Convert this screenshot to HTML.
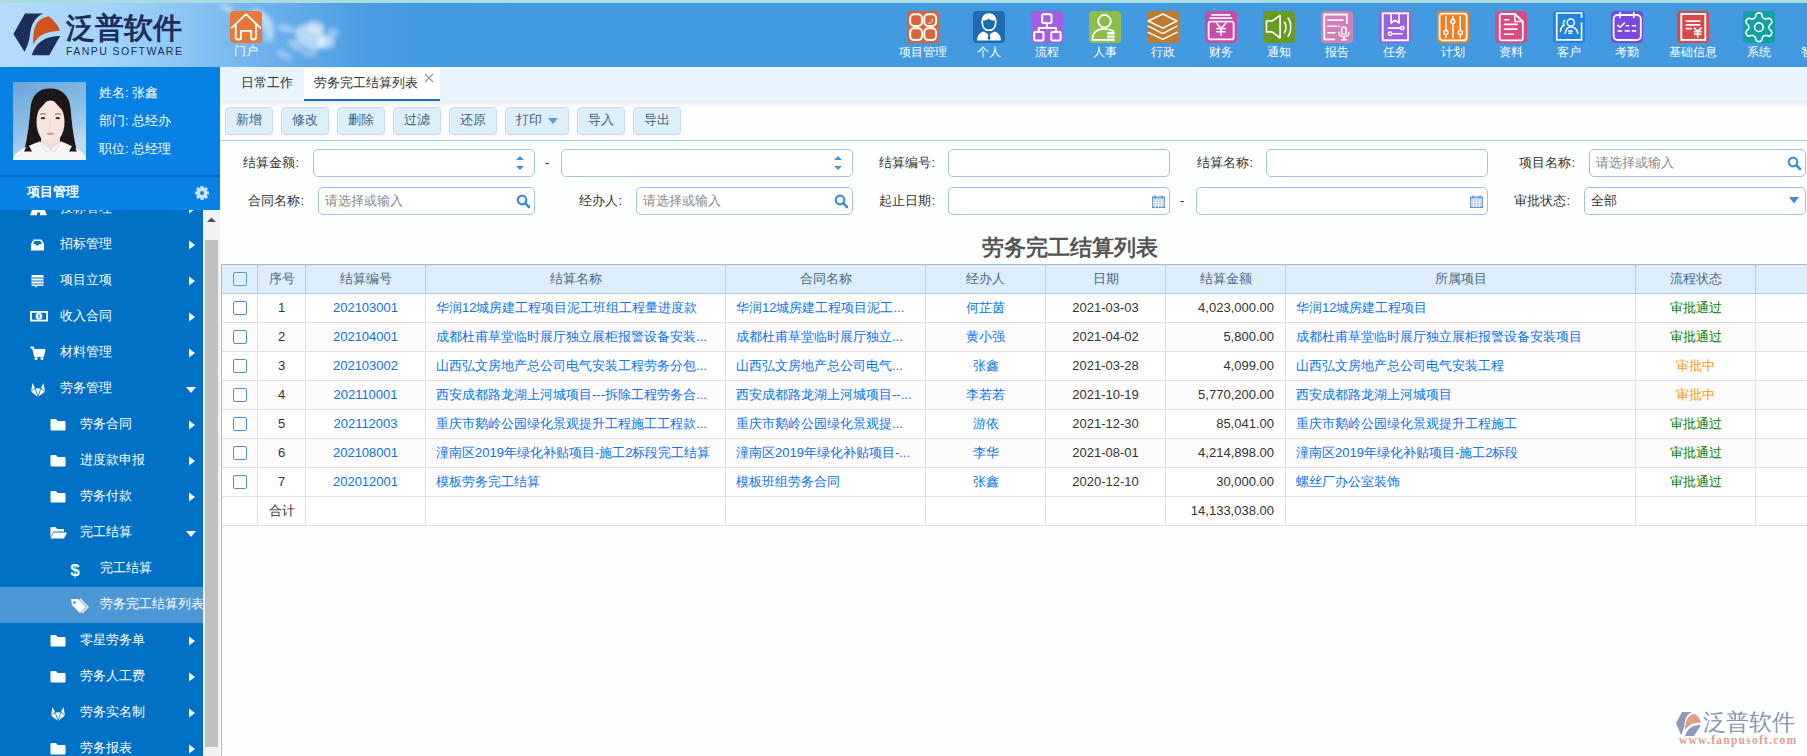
<!DOCTYPE html>
<html><head><meta charset="utf-8"><title>劳务完工结算列表</title>
<style>
*{box-sizing:border-box;margin:0;padding:0}
html,body{width:1807px;height:756px;overflow:hidden}
body{position:relative;font-family:"Liberation Sans",sans-serif;font-size:13px;color:#333;background:#fdfefe}
.a{position:absolute}
.t{position:absolute;white-space:nowrap;line-height:16px}
</style></head><body>

<div class="a" style="left:0;top:0;width:1807px;height:3px;background:#a9dbdf"></div>
<div class="a" style="left:0;top:3px;width:1807px;height:64px;background:linear-gradient(90deg,#b4dcfc 0px,#a5d5f9 100px,#8ac4f3 190px,#64abea 290px,#4a9de2 370px,#439ae0 420px,#4299df 1807px)"></div>
<svg class="a" style="left:205px;top:3px" width="150" height="64" viewBox="205 3 150 64">
<defs><filter id="bl" x="-50%" y="-50%" width="200%" height="200%"><feGaussianBlur stdDeviation="2"/></filter></defs>
<g fill="#ffffff" filter="url(#bl)">
<ellipse cx="227" cy="8.5" rx="8" ry="3" opacity="0.45" transform="rotate(28 227 8.5)"/>
<ellipse cx="258" cy="13" rx="8" ry="4" opacity="0.4" transform="rotate(20 258 13)"/>
<ellipse cx="267" cy="25" rx="6" ry="12" opacity="0.5" transform="rotate(-20 267 25)"/>
<ellipse cx="269" cy="38" rx="6" ry="4" opacity="0.35"/>
<ellipse cx="286" cy="28.5" rx="9" ry="3.5" opacity="0.4" transform="rotate(15 286 28.5)"/>
<ellipse cx="311" cy="37" rx="17" ry="11" opacity="0.55" transform="rotate(28 311 37)"/>
<ellipse cx="316" cy="27" rx="9" ry="6" opacity="0.55" transform="rotate(20 316 27)"/>
<ellipse cx="326" cy="42" rx="9" ry="7" opacity="0.5"/>
<ellipse cx="333" cy="33" rx="6" ry="5" opacity="0.35"/>
<ellipse cx="296" cy="45" rx="9" ry="5" opacity="0.35" transform="rotate(30 296 45)"/>
<ellipse cx="284" cy="55" rx="9" ry="3.5" opacity="0.3" transform="rotate(25 284 55)"/>
<ellipse cx="310" cy="53" rx="8" ry="4" opacity="0.3"/>
</g></svg>
<svg class="a" style="left:10px;top:10px" width="56" height="50" viewBox="10 10 56 50">
<path d="M13.4 34 L25 13.4 L43.4 13.4 C36 16 31 24 30 34 C29.5 41 27 47 24.5 51.8 Z" fill="#1c2f5c"/>
<path d="M31.8 55.3 L49.2 55.3 L60.2 36 C52 36 44 38 38 44 C35 47 33 51 31.8 55.3 Z" fill="#1c2f5c"/>
<path d="M33.2 44.7 C33 36 33.5 28 37 23 C40 19 45 16.4 49.2 16.4 C54 20 58 25 60.2 30.8 C52 31 44 33 39 37 C36 39.5 34.5 42 33.2 44.7 Z" fill="#d0541f"/>
</svg>
<div class="t" style="left:66px;top:10px;font-size:29px;line-height:36px;color:#1c2f5c;letter-spacing:0px;font-weight:bold">泛普软件</div>
<div class="t" style="left:66px;top:43.5px;font-size:10.5px;line-height:14px;color:#1c2f5c;letter-spacing:1.45px">FANPU SOFTWARE</div>
<div class="a" style="left:230px;top:11px;width:32px;height:32px;border-radius:4px;background:#e8783a"></div>
<svg class="a" style="left:230px;top:11px" width="32" height="32" viewBox="0 0 32 32">
<path d="M1.7 16.9 L16 3.2 L30.3 16.9 M5.7 14 V26.5 Q5.7 28.5 7.7 28.5 H9 Q11 28.5 11 26.5 V19.8 H21.2 V26.5 Q21.2 28.5 23.2 28.5 H24 Q26 28.5 26 26.5 V14" fill="none" stroke="#fff" stroke-width="1.8" stroke-linejoin="round" stroke-linecap="round"/></svg>
<div class="t" style="left:234px;top:44px;font-size:12px;line-height:14px;color:#fff">门户</div>
<div class="a" style="left:907px;top:11px;width:32px;height:32px;border-radius:4px;background:#d5663a"></div>
<svg class="a" style="left:907px;top:11px" width="32" height="32" viewBox="0 0 32 32"><g fill="none" stroke="#fff" stroke-width="2" stroke-linecap="round" stroke-linejoin="round"><rect x="3.2" y="3.2" width="11.8" height="11.8" rx="4"/><rect x="17.3" y="3.2" width="11.8" height="11.8" rx="4"/><rect x="3.2" y="17.3" width="11.8" height="11.8" rx="4"/><rect x="17.3" y="17.3" width="11.8" height="11.8" rx="4"/><path d="M25.5 8 Q25.5 12 22 12.3" stroke-width="0.9"/></g></svg>
<div class="t" style="left:899px;top:44px;width:48px;text-align:center;font-size:12px;line-height:16px;color:#fff">项目管理</div>
<div class="a" style="left:973px;top:11px;width:32px;height:32px;border-radius:4px;background:#1d6bb0"></div>
<svg class="a" style="left:973px;top:11px" width="32" height="32" viewBox="0 0 32 32"><g fill="none" stroke="#fff" stroke-width="2" stroke-linecap="round" stroke-linejoin="round"><path d="M8.6 11 C8.4 5 11.5 2.2 16 2.2 C20.5 2.2 23.6 5 23.4 11 L22.5 9.5 C20 9.8 17 9.2 15.5 7.5 C14 9.3 11 9.8 9.4 9.5 Z" fill="#fff" stroke="none"/><path d="M9.2 10 C9 16 11.5 19.3 16 19.3 C20.5 19.3 23 16 22.8 10" stroke-width="1.6"/><path d="M4 29.4 C4.5 23.5 7 21.5 10.5 20.4 L14.3 22.5 L15.2 24 L14.6 27.5 L16 29 L17.4 27.5 L16.8 24 L17.7 22.5 L21.5 20.4 C25 21.5 27.5 23.5 28 29.4 Z" fill="#fff" stroke="none"/></g></svg>
<div class="t" style="left:977px;top:44px;width:24px;text-align:center;font-size:12px;line-height:16px;color:#fff">个人</div>
<div class="a" style="left:1031px;top:11px;width:32px;height:32px;border-radius:4px;background:#a45ee6"></div>
<svg class="a" style="left:1031px;top:11px" width="32" height="32" viewBox="0 0 32 32"><g fill="none" stroke="#fff" stroke-width="2" stroke-linecap="round" stroke-linejoin="round"><rect x="11.2" y="3.2" width="9.3" height="8.8" rx="1"/><rect x="3.2" y="21" width="9.3" height="8.4" rx="1"/><rect x="20.3" y="21" width="9.3" height="8.4" rx="1"/><path d="M15.9 12 V17 M7.8 21 V17 H24.9 V21"/></g></svg>
<div class="t" style="left:1035px;top:44px;width:24px;text-align:center;font-size:12px;line-height:16px;color:#fff">流程</div>
<div class="a" style="left:1089px;top:11px;width:32px;height:32px;border-radius:4px;background:#8dbd4a"></div>
<svg class="a" style="left:1089px;top:11px" width="32" height="32" viewBox="0 0 32 32"><g fill="none" stroke="#fff" stroke-width="2" stroke-linecap="round" stroke-linejoin="round"><circle cx="15.5" cy="10.2" r="6.3" stroke-width="1.7"/><path d="M3.4 28.9 C3 22 8 17.8 15 17.8 C19 17.8 22.5 19 24.4 20.2 M3.4 28.9 H18.3" stroke-width="1.7"/><path d="M18.2 22.3 H25.6 M18.2 25.6 H25.6 M18.2 28.9 H25.6" stroke-width="2.4" stroke-linecap="butt"/></g></svg>
<div class="t" style="left:1093px;top:44px;width:24px;text-align:center;font-size:12px;line-height:16px;color:#fff">人事</div>
<div class="a" style="left:1147px;top:11px;width:32px;height:32px;border-radius:4px;background:#c07a30"></div>
<svg class="a" style="left:1147px;top:11px" width="32" height="32" viewBox="0 0 32 32"><g fill="none" stroke="#fff" stroke-width="2" stroke-linecap="round" stroke-linejoin="round"><path d="M15.8 3 L29.9 10 L15.8 17.1 L1.2 10 Z" stroke-width="1.5"/><path d="M1.2 15.2 L15.8 22.7 L29.9 15.2" stroke-width="1.5"/><path d="M1.2 21.3 L15.8 28.4 L29.9 21.3" stroke-width="1.5"/></g></svg>
<div class="t" style="left:1151px;top:44px;width:24px;text-align:center;font-size:12px;line-height:16px;color:#fff">行政</div>
<div class="a" style="left:1205px;top:11px;width:32px;height:32px;border-radius:4px;background:#c94aa8"></div>
<svg class="a" style="left:1205px;top:11px" width="32" height="32" viewBox="0 0 32 32"><g fill="none" stroke="#fff" stroke-width="2" stroke-linecap="round" stroke-linejoin="round"><path d="M7.2 3.9 H24.6 M5.3 7.2 H26.5" stroke-width="1.8"/><rect x="3.6" y="10.6" width="25" height="17.8" rx="2" stroke-width="1.8"/><path d="M11.6 12.5 L16.1 17.4 L20.6 12.5 M16.1 17.4 V24.2 M11.8 17.6 H20.4 M11.8 20.8 H20.4" stroke-width="1.6"/></g></svg>
<div class="t" style="left:1209px;top:44px;width:24px;text-align:center;font-size:12px;line-height:16px;color:#fff">财务</div>
<div class="a" style="left:1263px;top:11px;width:32px;height:32px;border-radius:4px;background:#6b9a22"></div>
<svg class="a" style="left:1263px;top:11px" width="32" height="32" viewBox="0 0 32 32"><g fill="none" stroke="#fff" stroke-width="2" stroke-linecap="round" stroke-linejoin="round"><path d="M3.5 10 H9.1 L17.1 4.4 V27 L9.1 20.9 H3.5 Z" stroke-width="1.6"/><path d="M21.4 11.3 C23.5 13.5 23.5 19 21.4 21.4 M25.1 7 C28.5 11 28.5 21 25.1 25.3" stroke-width="1.6"/></g></svg>
<div class="t" style="left:1267px;top:44px;width:24px;text-align:center;font-size:12px;line-height:16px;color:#fff">通知</div>
<div class="a" style="left:1321px;top:11px;width:32px;height:32px;border-radius:4px;background:#d27fb8"></div>
<svg class="a" style="left:1321px;top:11px" width="32" height="32" viewBox="0 0 32 32"><g fill="none" stroke="#fff" stroke-width="2" stroke-linecap="round" stroke-linejoin="round"><path d="M14.1 28.4 H3.3 V3.5 H25.9 V12.9" stroke-width="1.8" stroke-linejoin="miter" stroke-linecap="butt"/><path d="M6.8 9.1 H22 M6.8 15.2 H15.5 M6.8 21.8 H14" stroke-width="1.6"/><circle cx="18" cy="15.2" r="0.9" fill="#fff" stroke="none"/><rect x="20.6" y="16" width="4.6" height="7.6" rx="2.3" stroke-width="1.5"/><path d="M18 21.5 C18 27 27.9 27 27.9 21.5 M23 26.4 V28.8 M20.5 28.8 H25.5" stroke-width="1.5"/></g></svg>
<div class="t" style="left:1325px;top:44px;width:24px;text-align:center;font-size:12px;line-height:16px;color:#fff">报告</div>
<div class="a" style="left:1379px;top:11px;width:32px;height:32px;border-radius:4px;background:#9b60e2"></div>
<svg class="a" style="left:1379px;top:11px" width="32" height="32" viewBox="0 0 32 32"><g fill="none" stroke="#fff" stroke-width="2" stroke-linecap="round" stroke-linejoin="round"><rect x="3.7" y="2.3" width="25.3" height="27" stroke-width="1.9" stroke-linejoin="miter"/><path d="M12.1 2.3 V12 L16 9.1 L20.1 12 V2.3" stroke-width="1.6"/><path d="M9.3 17.1 H21.5 M12.8 22.8 H23" stroke-width="1.6"/><circle cx="23.3" cy="17.1" r="1.7" stroke-width="1.5"/><circle cx="11.1" cy="22.8" r="1.7" stroke-width="1.5"/></g></svg>
<div class="t" style="left:1383px;top:44px;width:24px;text-align:center;font-size:12px;line-height:16px;color:#fff">任务</div>
<div class="a" style="left:1437px;top:11px;width:32px;height:32px;border-radius:4px;background:#ef7f22"></div>
<svg class="a" style="left:1437px;top:11px" width="32" height="32" viewBox="0 0 32 32"><g fill="none" stroke="#fff" stroke-width="2" stroke-linecap="round" stroke-linejoin="round"><rect x="2.6" y="2.6" width="27" height="26.7" rx="3" stroke-width="1.8"/><path d="M8.9 5.4 V19.3 M8.9 23.5 V26.5 M15.9 5.4 V8.4 M15.9 12.6 V26.5 M23.2 5.4 V19.3 M23.2 23.5 V26.5" stroke-width="1.5"/><circle cx="8.9" cy="21.4" r="2" stroke-width="1.5"/><circle cx="15.9" cy="10.5" r="2" stroke-width="1.5"/><circle cx="23.2" cy="21.4" r="2" stroke-width="1.5"/></g></svg>
<div class="t" style="left:1441px;top:44px;width:24px;text-align:center;font-size:12px;line-height:16px;color:#fff">计划</div>
<div class="a" style="left:1495px;top:11px;width:32px;height:32px;border-radius:4px;background:#d94a82"></div>
<svg class="a" style="left:1495px;top:11px" width="32" height="32" viewBox="0 0 32 32"><g fill="none" stroke="#fff" stroke-width="2" stroke-linecap="round" stroke-linejoin="round"><path d="M6.5 3 H19.8 L27.8 10.5 V27.3 Q27.8 29.3 25.8 29.3 H6.7 Q4.7 29.3 4.7 27.3 V5 Q4.7 3 6.5 3 Z" stroke-width="1.8"/><path d="M19.8 3 V10.5 H27.8" stroke-width="1.5"/><path d="M9.5 8.7 H13.6 M9.5 13.4 H22 M9.5 18.1 H22 M9.5 23.2 H18.4" stroke-width="1.6"/></g></svg>
<div class="t" style="left:1499px;top:44px;width:24px;text-align:center;font-size:12px;line-height:16px;color:#fff">资料</div>
<div class="a" style="left:1553px;top:11px;width:32px;height:32px;border-radius:4px;background:#2282de"></div>
<svg class="a" style="left:1553px;top:11px" width="32" height="32" viewBox="0 0 32 32"><g fill="none" stroke="#fff" stroke-width="2" stroke-linecap="round" stroke-linejoin="round"><path d="M28.6 6.8 V2 H3.7 V28.9 H28.6 V11.5" stroke-width="1.7" stroke-linejoin="miter" stroke-linecap="butt"/><circle cx="17.8" cy="11.5" r="3.6" stroke-width="1.5"/><path d="M12.2 22.3 C12.8 17.5 15 16 17.8 16 C21 16 24.2 18 24.8 22.3 M7.4 20.4 C8 16 10 14.5 11.2 14 C10 13 10.2 10.5 11.7 9.2 M15.4 19.9 H19.2 M15.9 22.3 H18.7" stroke-width="1.5"/></g></svg>
<div class="t" style="left:1557px;top:44px;width:24px;text-align:center;font-size:12px;line-height:16px;color:#fff">客户</div>
<div class="a" style="left:1611px;top:11px;width:32px;height:32px;border-radius:4px;background:#7a4ae0"></div>
<svg class="a" style="left:1611px;top:11px" width="32" height="32" viewBox="0 0 32 32"><g fill="none" stroke="#fff" stroke-width="2" stroke-linecap="round" stroke-linejoin="round"><rect x="2.6" y="4" width="27.2" height="25" rx="4" stroke-width="1.8"/><path d="M9.1 1.6 V6.3 M22.8 1.6 V6.3" stroke-width="1.8"/><path d="M6.8 14.3 L9.1 16.2 L13.4 12 M15.2 14.8 H17.6 M21.4 14.8 H24.6 M7.2 19.9 H10.5 M14.3 19.9 H18.1 M21.4 19.9 H24.6" stroke-width="1.6"/></g></svg>
<div class="t" style="left:1615px;top:44px;width:24px;text-align:center;font-size:12px;line-height:16px;color:#fff">考勤</div>
<div class="a" style="left:1677px;top:11px;width:32px;height:32px;border-radius:4px;background:#d84a4a"></div>
<svg class="a" style="left:1677px;top:11px" width="32" height="32" viewBox="0 0 32 32"><g fill="none" stroke="#fff" stroke-width="2" stroke-linecap="round" stroke-linejoin="round"><rect x="4.3" y="3" width="24" height="25.9" stroke-width="1.9" stroke-linejoin="miter"/><path d="M9.4 10.1 H22.6 M9.4 13.8 H22.6 M9.4 17.6 H14.1" stroke-width="1.8"/><path d="M17.4 17.1 L20.7 20.4 L24 17.1 M20.7 20.4 V26.2 M17.5 20.6 H24 M17.5 23.2 H24" stroke-width="1.6"/></g></svg>
<div class="t" style="left:1669px;top:44px;width:48px;text-align:center;font-size:12px;line-height:16px;color:#fff">基础信息</div>
<div class="a" style="left:1743px;top:11px;width:32px;height:32px;border-radius:4px;background:#12a0a0"></div>
<svg class="a" style="left:1743px;top:11px" width="32" height="32" viewBox="0 0 32 32"><g fill="none" stroke="#fff" stroke-width="2" stroke-linecap="round" stroke-linejoin="round"><path d="M15.90 1.80 L16.40 1.84 L16.90 1.95 L17.38 2.14 L17.84 2.41 L18.27 2.76 L18.66 3.20 L18.99 3.81 L19.11 5.02 L19.33 5.63 L19.58 6.10 L19.82 6.49 L20.07 6.82 L20.33 7.11 L20.61 7.34 L20.90 7.54 L21.21 7.69 L21.56 7.81 L21.93 7.90 L22.35 7.95 L22.81 7.97 L23.34 7.94 L23.98 7.83 L25.08 7.33 L25.77 7.31 L26.36 7.43 L26.88 7.62 L27.34 7.89 L27.74 8.21 L28.09 8.58 L28.37 9.00 L28.59 9.45 L28.74 9.94 L28.82 10.45 L28.81 10.98 L28.73 11.53 L28.54 12.09 L28.17 12.68 L27.19 13.39 L26.77 13.89 L26.49 14.33 L26.27 14.74 L26.11 15.13 L25.99 15.49 L25.92 15.85 L25.90 16.20 L25.92 16.55 L25.99 16.91 L26.11 17.27 L26.27 17.66 L26.49 18.07 L26.77 18.51 L27.19 19.01 L28.17 19.72 L28.54 20.31 L28.73 20.87 L28.81 21.42 L28.82 21.95 L28.74 22.46 L28.59 22.95 L28.37 23.40 L28.09 23.82 L27.74 24.19 L27.34 24.51 L26.88 24.78 L26.36 24.97 L25.77 25.09 L25.08 25.07 L23.98 24.57 L23.34 24.46 L22.81 24.43 L22.35 24.45 L21.93 24.50 L21.56 24.59 L21.21 24.71 L20.90 24.86 L20.61 25.06 L20.33 25.29 L20.07 25.58 L19.82 25.91 L19.58 26.30 L19.33 26.77 L19.11 27.38 L18.99 28.59 L18.66 29.20 L18.27 29.64 L17.84 29.99 L17.38 30.26 L16.90 30.45 L16.40 30.56 L15.90 30.60 L15.40 30.56 L14.90 30.45 L14.42 30.26 L13.96 29.99 L13.53 29.64 L13.14 29.20 L12.81 28.59 L12.69 27.38 L12.47 26.77 L12.22 26.30 L11.98 25.91 L11.73 25.58 L11.47 25.29 L11.19 25.06 L10.90 24.86 L10.59 24.71 L10.24 24.59 L9.87 24.50 L9.45 24.45 L8.99 24.43 L8.46 24.46 L7.82 24.57 L6.72 25.07 L6.03 25.09 L5.44 24.97 L4.92 24.78 L4.46 24.51 L4.06 24.19 L3.71 23.82 L3.43 23.40 L3.21 22.95 L3.06 22.46 L2.98 21.95 L2.99 21.42 L3.07 20.87 L3.26 20.31 L3.63 19.72 L4.61 19.01 L5.03 18.51 L5.31 18.07 L5.53 17.66 L5.69 17.27 L5.81 16.91 L5.88 16.55 L5.90 16.20 L5.88 15.85 L5.81 15.49 L5.69 15.13 L5.53 14.74 L5.31 14.33 L5.03 13.89 L4.61 13.39 L3.63 12.68 L3.26 12.09 L3.07 11.53 L2.99 10.98 L2.98 10.45 L3.06 9.94 L3.21 9.45 L3.43 9.00 L3.71 8.58 L4.06 8.21 L4.46 7.89 L4.92 7.62 L5.44 7.43 L6.03 7.31 L6.72 7.33 L7.82 7.83 L8.46 7.94 L8.99 7.97 L9.45 7.95 L9.87 7.90 L10.24 7.81 L10.59 7.69 L10.90 7.54 L11.19 7.34 L11.47 7.11 L11.73 6.82 L11.98 6.49 L12.22 6.10 L12.47 5.63 L12.69 5.02 L12.81 3.81 L13.14 3.20 L13.53 2.76 L13.96 2.41 L14.42 2.14 L14.90 1.95 L15.40 1.84 L15.90 1.80Z" stroke-width="1.6"/><circle cx="15.9" cy="16.2" r="4.3" stroke-width="1.6"/></g></svg>
<div class="t" style="left:1747px;top:44px;width:24px;text-align:center;font-size:12px;line-height:16px;color:#fff">系统</div>
<div class="t" style="left:1801px;top:44px;font-size:12px;line-height:16px;color:#fff">智</div>
<div class="a" style="left:0;top:67px;width:220px;height:108px;background:#0781e3"></div>
<div class="a" style="left:0;top:175px;width:220px;height:2px;background:#066bbf"></div>
<div class="a" style="left:0;top:177px;width:220px;height:33px;background:#0781e3"></div>
<div class="a" style="left:0;top:210px;width:203px;height:546px;background:#0071c4"></div>
<svg class="a" style="left:13px;top:82px" width="73" height="78" viewBox="0 0 73 78">
<defs><linearGradient id="pg" x1="0" y1="0" x2="0.35" y2="1"><stop offset="0" stop-color="#6aa5d9"/><stop offset="0.6" stop-color="#8fc0e8"/><stop offset="1" stop-color="#bcdcf4"/></linearGradient></defs>
<rect width="73" height="78" fill="url(#pg)"/>
<path d="M37 6.5 C25 6.5 18.5 14 17.5 26 C16.5 40 14.5 56 11 69.5 L28.5 69.5 L28.5 50 L46.5 50 L46.5 69.5 L64 69.5 C60.5 56 58.5 40 57.5 26 C56.5 14 49 6.5 37 6.5Z" fill="#1d1717"/>
<rect x="28" y="48" width="19" height="23" fill="#efdcd2"/>
<ellipse cx="37.5" cy="40" rx="14" ry="21.5" fill="#f5e5de"/>
<path d="M22.5 31 C22 20 28.5 12.5 37 12.5 C35 18 30 24 22.5 31 Z M52.5 31 C53 20 46.5 12.5 37 12.5 C39.5 18 45 24 52.5 31 Z" fill="#1d1717"/>
<path d="M27 32.3 Q30 31 33 32.3 M42 32.3 Q45 31 48 32.3" stroke="#6a5550" stroke-width="0.9" fill="none"/>
<ellipse cx="30" cy="36.2" rx="2.3" ry="1.1" fill="#3a2c2a"/><ellipse cx="44.8" cy="36.2" rx="2.3" ry="1.1" fill="#3a2c2a"/>
<path d="M37.5 37 L36.5 45 L38.5 45" stroke="#e8cfc4" stroke-width="0.8" fill="none"/>
<ellipse cx="37.5" cy="51.8" rx="3.6" ry="1.3" fill="#e39a9e"/>
<path d="M0 78 L0.5 75 C3 69 13 64.5 27 59.5 L37.5 68 L48 59.5 C61 64.5 70 69 72.5 75 L73 78 Z" fill="#f6f6f8"/>
<path d="M27 59.5 L33 70 L37.5 68 L42 70 L48 59.5" stroke="#dcdce2" stroke-width="0.8" fill="none"/>
<path d="M11 69.5 L15 62 L19 69.5 Z M64 69.5 L60 62 L56 69.5 Z" fill="#1d1717"/>
</svg>
<div class="t" style="left:99px;top:85px;color:#fff;font-size:13px">姓名: 张鑫</div>
<div class="t" style="left:99px;top:113px;color:#fff;font-size:13px">部门: 总经办</div>
<div class="t" style="left:99px;top:141px;color:#fff;font-size:13px">职位: 总经理</div>
<div class="t" style="left:27px;top:184px;color:#fff;font-size:13px;font-weight:bold">项目管理</div>
<svg class="a" style="left:194px;top:185px" width="16" height="16" viewBox="0 0 16 16"><g fill="#cfe3f7">
<circle cx="8" cy="8" r="5.4"/>
<rect x="6.4" y="1" width="3.2" height="14" rx="0.5"/>
<rect x="6.4" y="1" width="3.2" height="14" rx="0.5" transform="rotate(45 8 8)"/>
<rect x="6.4" y="1" width="3.2" height="14" rx="0.5" transform="rotate(90 8 8)"/>
<rect x="6.4" y="1" width="3.2" height="14" rx="0.5" transform="rotate(135 8 8)"/>
</g><circle cx="8" cy="8" r="2" fill="#0781e3"/></svg>
<div class="a" style="left:203px;top:210px;width:17px;height:546px;background:#f1f1f1"></div>
<div class="a" style="left:205px;top:240px;width:13px;height:507px;background:#c1c1c1"></div>
<svg class="a" style="left:203px;top:212px" width="17" height="14" viewBox="0 0 17 14"><path d="M4 10 L8.5 5.5 L13 10 Z" fill="#505050"/></svg>
<div class="a" style="left:0;top:210px;width:203px;height:546px;overflow:hidden"><div class="a" style="left:0;top:-210px;width:203px;height:966px"><svg class="a" style="left:30px;top:202px" width="19" height="16" viewBox="0 0 19 16"><path d="M3 2 H14 V8 H15 L17 13.3 H10 V10.5 H7 V13.3 H0 L2 8 H3 Z" fill="#fff"/></svg><div class="t" style="left:60px;top:200px;color:#fff;font-size:13px">投标管理</div><svg class="a" style="left:189px;top:204px" width="7" height="10" viewBox="0 0 7 10"><path d="M0 0.5 L6 5 L0 9.5 Z" fill="#fff"/></svg><svg class="a" style="left:30px;top:238px" width="19" height="16" viewBox="0 0 19 16"><path d="M1 6 L3.5 1.5 H11.5 L14 6 V12.5 H1 Z" fill="#fff"/><path d="M3 6 H5.5 L6.5 7.5 H8.5 L9.5 6 H12 L10.5 3 H4.5 Z" fill="#0071c4"/></svg><div class="t" style="left:60px;top:236px;color:#fff;font-size:13px">招标管理</div><svg class="a" style="left:189px;top:240px" width="7" height="10" viewBox="0 0 7 10"><path d="M0 0.5 L6 5 L0 9.5 Z" fill="#fff"/></svg><svg class="a" style="left:30px;top:274px" width="19" height="16" viewBox="0 0 19 16"><path d="M1.5 1 H12.5 Q13.5 1 13.5 2 V11 Q13.5 12 12.5 12 H7 L6 14 L5 12 H2.5 Q1.5 12 1.5 11 V2 Q1.5 1 2.5 1 Z" fill="#fff"/><path d="M1.5 4 H13.5 M1.5 7 H13.5 M1.5 10 H13.5" stroke="#0071c4" stroke-width="1"/></svg><div class="t" style="left:60px;top:272px;color:#fff;font-size:13px">项目立项</div><svg class="a" style="left:189px;top:276px" width="7" height="10" viewBox="0 0 7 10"><path d="M0 0.5 L6 5 L0 9.5 Z" fill="#fff"/></svg><svg class="a" style="left:30px;top:310px" width="19" height="16" viewBox="0 0 19 16"><rect x="0" y="1" width="18" height="10.5" fill="#fff"/><rect x="1.8" y="2.8" width="14.4" height="6.9" fill="#0071c4"/><ellipse cx="9" cy="6.25" rx="3.3" ry="3.6" fill="#fff"/><path d="M9 4.3 V8.2" stroke="#0071c4" stroke-width="1.1"/></svg><div class="t" style="left:60px;top:308px;color:#fff;font-size:13px">收入合同</div><svg class="a" style="left:189px;top:312px" width="7" height="10" viewBox="0 0 7 10"><path d="M0 0.5 L6 5 L0 9.5 Z" fill="#fff"/></svg><svg class="a" style="left:30px;top:346px" width="19" height="16" viewBox="0 0 19 16"><path d="M0.5 1.5 H3 L5 10 H13 L14.5 4 H4" fill="none" stroke="#fff" stroke-width="2" stroke-linejoin="round"/><path d="M4 4 H14.5 L13 9 H5 Z" fill="#fff"/><circle cx="6" cy="12.5" r="1.5" fill="#fff"/><circle cx="12" cy="12.5" r="1.5" fill="#fff"/></svg><div class="t" style="left:60px;top:344px;color:#fff;font-size:13px">材料管理</div><svg class="a" style="left:189px;top:348px" width="7" height="10" viewBox="0 0 7 10"><path d="M0 0.5 L6 5 L0 9.5 Z" fill="#fff"/></svg><svg class="a" style="left:30px;top:382px" width="19" height="16" viewBox="0 0 19 16"><path d="M8 15 L1 9.5 L2.5 1 L5 6 H11 L13.5 1 L15 9.5 Z" fill="#fff"/><path d="M8 15 L5 6 H11 Z M1 9.5 L5 6 M15 9.5 L11 6" stroke="#0071c4" stroke-width="0.8" fill="none"/></svg><div class="t" style="left:60px;top:380px;color:#fff;font-size:13px">劳务管理</div><svg class="a" style="left:186px;top:387px" width="10" height="6" viewBox="0 0 10 6"><path d="M0 0 H10 L5 6 Z" fill="#fff"/></svg><svg class="a" style="left:50px;top:418px" width="19" height="16" viewBox="0 0 19 16"><path d="M0.5 2 Q0.5 1 1.5 1 H6 L7.5 3 H14.5 Q15.5 3 15.5 4 V11.5 Q15.5 12.5 14.5 12.5 H1.5 Q0.5 12.5 0.5 11.5 Z" fill="#fff"/></svg><div class="t" style="left:80px;top:416px;color:#fff;font-size:13px">劳务合同</div><svg class="a" style="left:189px;top:420px" width="7" height="10" viewBox="0 0 7 10"><path d="M0 0.5 L6 5 L0 9.5 Z" fill="#fff"/></svg><svg class="a" style="left:50px;top:454px" width="19" height="16" viewBox="0 0 19 16"><path d="M0.5 2 Q0.5 1 1.5 1 H6 L7.5 3 H14.5 Q15.5 3 15.5 4 V11.5 Q15.5 12.5 14.5 12.5 H1.5 Q0.5 12.5 0.5 11.5 Z" fill="#fff"/></svg><div class="t" style="left:80px;top:452px;color:#fff;font-size:13px">进度款申报</div><svg class="a" style="left:189px;top:456px" width="7" height="10" viewBox="0 0 7 10"><path d="M0 0.5 L6 5 L0 9.5 Z" fill="#fff"/></svg><svg class="a" style="left:50px;top:490px" width="19" height="16" viewBox="0 0 19 16"><path d="M0.5 2 Q0.5 1 1.5 1 H6 L7.5 3 H14.5 Q15.5 3 15.5 4 V11.5 Q15.5 12.5 14.5 12.5 H1.5 Q0.5 12.5 0.5 11.5 Z" fill="#fff"/></svg><div class="t" style="left:80px;top:488px;color:#fff;font-size:13px">劳务付款</div><svg class="a" style="left:189px;top:492px" width="7" height="10" viewBox="0 0 7 10"><path d="M0 0.5 L6 5 L0 9.5 Z" fill="#fff"/></svg><svg class="a" style="left:50px;top:526px" width="19" height="16" viewBox="0 0 19 16"><path d="M0.5 2 Q0.5 1 1.5 1 H5.5 L7 3 H13 Q14 3 14 4 V5.5 H3.5 L0.5 11 Z" fill="#fff"/><path d="M3.5 6.5 H17 L14 12.5 H0.5 Z" fill="#fff"/></svg><div class="t" style="left:80px;top:524px;color:#fff;font-size:13px">完工结算</div><svg class="a" style="left:186px;top:531px" width="10" height="6" viewBox="0 0 10 6"><path d="M0 0 H10 L5 6 Z" fill="#fff"/></svg><svg class="a" style="left:70px;top:562px" width="19" height="16" viewBox="0 0 19 16"><text x="5" y="13.5" font-family="Liberation Sans" font-weight="bold" font-size="17" fill="#fff" text-anchor="middle">$</text></svg><div class="t" style="left:100px;top:560px;color:#fff;font-size:13px">完工结算</div><div class="a" style="left:0;top:587px;width:203px;height:36px;background:#4c98d6"></div><svg class="a" style="left:70px;top:598px" width="19" height="16" viewBox="0 0 19 16"><path d="M1 1 H8 L16 9 L10 15 L2 7 Z" fill="#fff"/><circle cx="4.5" cy="4.5" r="1.4" fill="#4c98d6"/><path d="M10 1 L18 9 L12 15" fill="none" stroke="#fff" stroke-width="1.3"/></svg><div class="t" style="left:100px;top:596px;color:#fff;font-size:13px">劳务完工结算列表</div><svg class="a" style="left:50px;top:634px" width="19" height="16" viewBox="0 0 19 16"><path d="M0.5 2 Q0.5 1 1.5 1 H6 L7.5 3 H14.5 Q15.5 3 15.5 4 V11.5 Q15.5 12.5 14.5 12.5 H1.5 Q0.5 12.5 0.5 11.5 Z" fill="#fff"/></svg><div class="t" style="left:80px;top:632px;color:#fff;font-size:13px">零星劳务单</div><svg class="a" style="left:189px;top:636px" width="7" height="10" viewBox="0 0 7 10"><path d="M0 0.5 L6 5 L0 9.5 Z" fill="#fff"/></svg><svg class="a" style="left:50px;top:670px" width="19" height="16" viewBox="0 0 19 16"><path d="M0.5 2 Q0.5 1 1.5 1 H6 L7.5 3 H14.5 Q15.5 3 15.5 4 V11.5 Q15.5 12.5 14.5 12.5 H1.5 Q0.5 12.5 0.5 11.5 Z" fill="#fff"/></svg><div class="t" style="left:80px;top:668px;color:#fff;font-size:13px">劳务人工费</div><svg class="a" style="left:189px;top:672px" width="7" height="10" viewBox="0 0 7 10"><path d="M0 0.5 L6 5 L0 9.5 Z" fill="#fff"/></svg><svg class="a" style="left:50px;top:706px" width="19" height="16" viewBox="0 0 19 16"><path d="M8 15 L1 9.5 L2.5 1 L5 6 H11 L13.5 1 L15 9.5 Z" fill="#fff"/><path d="M8 15 L5 6 H11 Z M1 9.5 L5 6 M15 9.5 L11 6" stroke="#0071c4" stroke-width="0.8" fill="none"/></svg><div class="t" style="left:80px;top:704px;color:#fff;font-size:13px">劳务实名制</div><svg class="a" style="left:189px;top:708px" width="7" height="10" viewBox="0 0 7 10"><path d="M0 0.5 L6 5 L0 9.5 Z" fill="#fff"/></svg><svg class="a" style="left:50px;top:742px" width="19" height="16" viewBox="0 0 19 16"><path d="M0.5 2 Q0.5 1 1.5 1 H6 L7.5 3 H14.5 Q15.5 3 15.5 4 V11.5 Q15.5 12.5 14.5 12.5 H1.5 Q0.5 12.5 0.5 11.5 Z" fill="#fff"/></svg><div class="t" style="left:80px;top:740px;color:#fff;font-size:13px">劳务报表</div><svg class="a" style="left:189px;top:744px" width="7" height="10" viewBox="0 0 7 10"><path d="M0 0.5 L6 5 L0 9.5 Z" fill="#fff"/></svg></div></div>
<div class="a" style="left:220px;top:67px;width:1587px;height:34px;background:#e8f5fe"></div>
<div class="a" style="left:220px;top:101px;width:1587px;height:6px;background:linear-gradient(#ececec,#fbfcfe)"></div>
<div class="a" style="left:304px;top:68px;width:136px;height:33px;background:#fff;border-bottom:2px solid #1a6fc6"></div>
<div class="t" style="left:241px;top:75px;color:#333;font-size:13px">日常工作</div>
<div class="t" style="left:314px;top:75px;color:#333;font-size:13px">劳务完工结算列表</div>
<svg class="a" style="left:424px;top:73px" width="10" height="10" viewBox="0 0 10 10"><path d="M1 1 L9 9 M9 1 L1 9" stroke="#999" stroke-width="1.2"/></svg>
<div class="a" style="left:225px;top:107px;width:48px;height:28px;background:#dfeefb;border:1px solid #c3dcf1;border-radius:4px"></div>
<div class="t" style="left:236px;top:112px;width:26px;color:#3f5f80;font-size:13px">新增</div>
<div class="a" style="left:281px;top:107px;width:48px;height:28px;background:#dfeefb;border:1px solid #c3dcf1;border-radius:4px"></div>
<div class="t" style="left:292px;top:112px;width:26px;color:#3f5f80;font-size:13px">修改</div>
<div class="a" style="left:337px;top:107px;width:48px;height:28px;background:#dfeefb;border:1px solid #c3dcf1;border-radius:4px"></div>
<div class="t" style="left:348px;top:112px;width:26px;color:#3f5f80;font-size:13px">删除</div>
<div class="a" style="left:393px;top:107px;width:48px;height:28px;background:#dfeefb;border:1px solid #c3dcf1;border-radius:4px"></div>
<div class="t" style="left:404px;top:112px;width:26px;color:#3f5f80;font-size:13px">过滤</div>
<div class="a" style="left:449px;top:107px;width:48px;height:28px;background:#dfeefb;border:1px solid #c3dcf1;border-radius:4px"></div>
<div class="t" style="left:460px;top:112px;width:26px;color:#3f5f80;font-size:13px">还原</div>
<div class="a" style="left:505px;top:107px;width:64px;height:28px;background:#dfeefb;border:1px solid #c3dcf1;border-radius:4px"></div>
<div class="t" style="left:516px;top:112px;color:#3f5f80;font-size:13px">打印</div>
<svg class="a" style="left:548px;top:118px" width="10" height="6" viewBox="0 0 10 6"><path d="M0 0 H10 L5 6 Z" fill="#5a9ad8"/></svg>
<div class="a" style="left:577px;top:107px;width:48px;height:28px;background:#dfeefb;border:1px solid #c3dcf1;border-radius:4px"></div>
<div class="t" style="left:588px;top:112px;width:26px;color:#3f5f80;font-size:13px">导入</div>
<div class="a" style="left:633px;top:107px;width:48px;height:28px;background:#dfeefb;border:1px solid #c3dcf1;border-radius:4px"></div>
<div class="t" style="left:644px;top:112px;width:26px;color:#3f5f80;font-size:13px">导出</div>
<div class="a" style="left:220px;top:140px;width:1587px;height:1px;background:#a9cbe9"></div>
<div class="t" style="left:179px;top:155px;width:120px;text-align:right;color:#333;font-size:13px">结算金额:</div>
<div class="a" style="left:313px;top:149px;width:222px;height:28px;background:#fff;border:1px solid #9fc3e7;border-radius:5px"></div>
<svg class="a" style="left:515px;top:153px" width="10" height="20" viewBox="0 0 10 20"><path d="M1 7 L5 3 L9 7 Z M1 13 L5 17 L9 13 Z" fill="#4a90d9"/></svg>
<div class="t" style="left:545px;top:155px;color:#333">-</div>
<div class="a" style="left:561px;top:149px;width:292px;height:28px;background:#fff;border:1px solid #9fc3e7;border-radius:5px"></div>
<svg class="a" style="left:833px;top:153px" width="10" height="20" viewBox="0 0 10 20"><path d="M1 7 L5 3 L9 7 Z M1 13 L5 17 L9 13 Z" fill="#4a90d9"/></svg>
<div class="t" style="left:815px;top:155px;width:120px;text-align:right;color:#333;font-size:13px">结算编号:</div>
<div class="a" style="left:948px;top:149px;width:222px;height:28px;background:#fff;border:1px solid #9fc3e7;border-radius:5px"></div>
<div class="t" style="left:1133px;top:155px;width:120px;text-align:right;color:#333;font-size:13px">结算名称:</div>
<div class="a" style="left:1266px;top:149px;width:222px;height:28px;background:#fff;border:1px solid #9fc3e7;border-radius:5px"></div>
<div class="t" style="left:1455px;top:155px;width:120px;text-align:right;color:#333;font-size:13px">项目名称:</div>
<div class="a" style="left:1589px;top:149px;width:217px;height:28px;background:#fff;border:1px solid #9fc3e7;border-radius:5px"></div>
<div class="t" style="left:1596px;top:155px;color:#888;font-size:13px">请选择或输入</div>
<svg class="a" style="left:1787px;top:156px" width="15" height="15" viewBox="0 0 15 15"><circle cx="6" cy="6" r="4.3" fill="none" stroke="#3a8ee0" stroke-width="2.2"/><path d="M9.2 9.2 L13 13" stroke="#3a8ee0" stroke-width="2.6" stroke-linecap="round"/></svg>
<div class="t" style="left:184px;top:193px;width:120px;text-align:right;color:#333;font-size:13px">合同名称:</div>
<div class="a" style="left:318px;top:187px;width:217px;height:28px;background:#fff;border:1px solid #9fc3e7;border-radius:5px"></div>
<div class="t" style="left:325px;top:193px;color:#888;font-size:13px">请选择或输入</div>
<svg class="a" style="left:516px;top:194px" width="15" height="15" viewBox="0 0 15 15"><circle cx="6" cy="6" r="4.3" fill="none" stroke="#3a8ee0" stroke-width="2.2"/><path d="M9.2 9.2 L13 13" stroke="#3a8ee0" stroke-width="2.6" stroke-linecap="round"/></svg>
<div class="t" style="left:502px;top:193px;width:120px;text-align:right;color:#333;font-size:13px">经办人:</div>
<div class="a" style="left:636px;top:187px;width:217px;height:28px;background:#fff;border:1px solid #9fc3e7;border-radius:5px"></div>
<div class="t" style="left:643px;top:193px;color:#888;font-size:13px">请选择或输入</div>
<svg class="a" style="left:834px;top:194px" width="15" height="15" viewBox="0 0 15 15"><circle cx="6" cy="6" r="4.3" fill="none" stroke="#3a8ee0" stroke-width="2.2"/><path d="M9.2 9.2 L13 13" stroke="#3a8ee0" stroke-width="2.6" stroke-linecap="round"/></svg>
<div class="t" style="left:815px;top:193px;width:120px;text-align:right;color:#333;font-size:13px">起止日期:</div>
<div class="a" style="left:948px;top:187px;width:222px;height:28px;background:#fff;border:1px solid #9fc3e7;border-radius:5px"></div>
<svg class="a" style="left:1152px;top:195px" width="13" height="13" viewBox="0 0 13 13"><rect x="0.5" y="2" width="12" height="10.5" fill="#a9c8ec" stroke="#5b8fd0" stroke-width="1"/><path d="M0.5 5 H12.5 M3.5 5 V12.5 M6.5 5 V12.5 M9.5 5 V12.5 M0.5 7.5 H12.5 M0.5 10 H12.5" stroke="#fff" stroke-width="0.8"/><path d="M3 0.5 V3 M10 0.5 V3" stroke="#5b8fd0" stroke-width="1.5"/></svg>
<div class="t" style="left:1180px;top:193px;color:#333">-</div>
<div class="a" style="left:1196px;top:187px;width:292px;height:28px;background:#fff;border:1px solid #9fc3e7;border-radius:5px"></div>
<svg class="a" style="left:1470px;top:195px" width="13" height="13" viewBox="0 0 13 13"><rect x="0.5" y="2" width="12" height="10.5" fill="#a9c8ec" stroke="#5b8fd0" stroke-width="1"/><path d="M0.5 5 H12.5 M3.5 5 V12.5 M6.5 5 V12.5 M9.5 5 V12.5 M0.5 7.5 H12.5 M0.5 10 H12.5" stroke="#fff" stroke-width="0.8"/><path d="M3 0.5 V3 M10 0.5 V3" stroke="#5b8fd0" stroke-width="1.5"/></svg>
<div class="t" style="left:1450px;top:193px;width:120px;text-align:right;color:#333;font-size:13px">审批状态:</div>
<div class="a" style="left:1584px;top:187px;width:222px;height:28px;background:#fff;border:1px solid #9fc3e7;border-radius:5px"></div>
<svg class="a" style="left:1789px;top:197px" width="10" height="7" viewBox="0 0 10 7"><path d="M0 0 H10 L5 6.5 Z" fill="#3a8ee0"/></svg>
<div class="t" style="left:1591px;top:193px;color:#333">全部</div>
<div class="t" style="left:982px;top:235px;font-size:22px;line-height:26px;font-weight:bold;color:#555">劳务完工结算列表</div>
<div class="a" style="left:221px;top:264px;width:1586px;height:30px;background:#deedfb"></div>
<div class="a" style="left:222px;top:294px;width:1585px;height:28px;background:#ffffff"></div>
<div class="a" style="left:222px;top:323px;width:1585px;height:28px;background:#fcfafb"></div>
<div class="a" style="left:222px;top:352px;width:1585px;height:28px;background:#ffffff"></div>
<div class="a" style="left:222px;top:381px;width:1585px;height:28px;background:#fcfafb"></div>
<div class="a" style="left:222px;top:410px;width:1585px;height:28px;background:#ffffff"></div>
<div class="a" style="left:222px;top:439px;width:1585px;height:28px;background:#fcfafb"></div>
<div class="a" style="left:222px;top:468px;width:1585px;height:28px;background:#ffffff"></div>
<div class="a" style="left:222px;top:497px;width:1585px;height:28px;background:#ffffff"></div>
<div class="a" style="left:221px;top:264px;width:1586px;height:1px;background:#8ec0ec"></div>
<div class="a" style="left:221px;top:293px;width:1586px;height:1px;background:#a9cdee"></div>
<div class="a" style="left:222px;top:322px;width:1585px;height:1px;background:#e1e1e1"></div>
<div class="a" style="left:222px;top:351px;width:1585px;height:1px;background:#e1e1e1"></div>
<div class="a" style="left:222px;top:380px;width:1585px;height:1px;background:#e1e1e1"></div>
<div class="a" style="left:222px;top:409px;width:1585px;height:1px;background:#e1e1e1"></div>
<div class="a" style="left:222px;top:438px;width:1585px;height:1px;background:#e1e1e1"></div>
<div class="a" style="left:222px;top:467px;width:1585px;height:1px;background:#e1e1e1"></div>
<div class="a" style="left:222px;top:496px;width:1585px;height:1px;background:#e1e1e1"></div>
<div class="a" style="left:222px;top:525px;width:1585px;height:1px;background:#e1e1e1"></div>
<div class="a" style="left:221px;top:264px;width:1px;height:492px;background:#8ec0ec"></div>
<div class="a" style="left:257px;top:265px;width:1px;height:28px;background:#b4d2ec"></div>
<div class="a" style="left:257px;top:294px;width:1px;height:232px;background:#e1e1e1"></div>
<div class="a" style="left:305px;top:265px;width:1px;height:28px;background:#b4d2ec"></div>
<div class="a" style="left:305px;top:294px;width:1px;height:232px;background:#e1e1e1"></div>
<div class="a" style="left:425px;top:265px;width:1px;height:28px;background:#b4d2ec"></div>
<div class="a" style="left:425px;top:294px;width:1px;height:232px;background:#e1e1e1"></div>
<div class="a" style="left:725px;top:265px;width:1px;height:28px;background:#b4d2ec"></div>
<div class="a" style="left:725px;top:294px;width:1px;height:232px;background:#e1e1e1"></div>
<div class="a" style="left:925px;top:265px;width:1px;height:28px;background:#b4d2ec"></div>
<div class="a" style="left:925px;top:294px;width:1px;height:232px;background:#e1e1e1"></div>
<div class="a" style="left:1045px;top:265px;width:1px;height:28px;background:#b4d2ec"></div>
<div class="a" style="left:1045px;top:294px;width:1px;height:232px;background:#e1e1e1"></div>
<div class="a" style="left:1165px;top:265px;width:1px;height:28px;background:#b4d2ec"></div>
<div class="a" style="left:1165px;top:294px;width:1px;height:232px;background:#e1e1e1"></div>
<div class="a" style="left:1285px;top:265px;width:1px;height:28px;background:#b4d2ec"></div>
<div class="a" style="left:1285px;top:294px;width:1px;height:232px;background:#e1e1e1"></div>
<div class="a" style="left:1635px;top:265px;width:1px;height:28px;background:#b4d2ec"></div>
<div class="a" style="left:1635px;top:294px;width:1px;height:232px;background:#e1e1e1"></div>
<div class="a" style="left:1755px;top:265px;width:1px;height:28px;background:#b4d2ec"></div>
<div class="a" style="left:1755px;top:294px;width:1px;height:232px;background:#e1e1e1"></div>
<div class="t" style="left:258px;top:271px;width:47px;text-align:center;color:#4a6784">序号</div>
<div class="t" style="left:306px;top:271px;width:119px;text-align:center;color:#4a6784">结算编号</div>
<div class="t" style="left:426px;top:271px;width:299px;text-align:center;color:#4a6784">结算名称</div>
<div class="t" style="left:726px;top:271px;width:199px;text-align:center;color:#4a6784">合同名称</div>
<div class="t" style="left:926px;top:271px;width:119px;text-align:center;color:#4a6784">经办人</div>
<div class="t" style="left:1046px;top:271px;width:119px;text-align:center;color:#4a6784">日期</div>
<div class="t" style="left:1166px;top:271px;width:119px;text-align:center;color:#4a6784">结算金额</div>
<div class="t" style="left:1286px;top:271px;width:349px;text-align:center;color:#4a6784">所属项目</div>
<div class="t" style="left:1636px;top:271px;width:119px;text-align:center;color:#4a6784">流程状态</div>
<div class="a" style="left:233px;top:272px;width:14px;height:14px;border:1.5px solid #5a9ad6;border-radius:2px;background:transparent"></div>
<div class="a" style="left:233px;top:301px;width:14px;height:14px;border:1.5px solid #4a90d9;border-radius:2px;background:#fff"></div>
<div class="t" style="left:258px;top:300px;width:47px;text-align:center;color:#333">1</div>
<div class="t" style="left:306px;top:300px;width:119px;text-align:center;color:#0a74ec">202103001</div>
<div class="t" style="left:436px;top:300px;width:289px;overflow:hidden;color:#0a74ec">华润12城房建工程项目泥工班组工程量进度款</div>
<div class="t" style="left:736px;top:300px;width:189px;overflow:hidden;color:#0a74ec">华润12城房建工程项目泥工...</div>
<div class="t" style="left:926px;top:300px;width:119px;text-align:center;color:#0a74ec">何芷茵</div>
<div class="t" style="left:1046px;top:300px;width:119px;text-align:center;color:#333">2021-03-03</div>
<div class="t" style="left:1166px;top:300px;width:108px;text-align:right;color:#333">4,023,000.00</div>
<div class="t" style="left:1296px;top:300px;width:339px;overflow:hidden;color:#0a74ec">华润12城房建工程项目</div>
<div class="t" style="left:1636px;top:300px;width:119px;text-align:center;color:#008000">审批通过</div>
<div class="a" style="left:233px;top:330px;width:14px;height:14px;border:1.5px solid #4a90d9;border-radius:2px;background:#fff"></div>
<div class="t" style="left:258px;top:329px;width:47px;text-align:center;color:#333">2</div>
<div class="t" style="left:306px;top:329px;width:119px;text-align:center;color:#0a74ec">202104001</div>
<div class="t" style="left:436px;top:329px;width:289px;overflow:hidden;color:#0a74ec">成都杜甫草堂临时展厅独立展柜报警设备安装...</div>
<div class="t" style="left:736px;top:329px;width:189px;overflow:hidden;color:#0a74ec">成都杜甫草堂临时展厅独立...</div>
<div class="t" style="left:926px;top:329px;width:119px;text-align:center;color:#0a74ec">黄小强</div>
<div class="t" style="left:1046px;top:329px;width:119px;text-align:center;color:#333">2021-04-02</div>
<div class="t" style="left:1166px;top:329px;width:108px;text-align:right;color:#333">5,800.00</div>
<div class="t" style="left:1296px;top:329px;width:339px;overflow:hidden;color:#0a74ec">成都杜甫草堂临时展厅独立展柜报警设备安装项目</div>
<div class="t" style="left:1636px;top:329px;width:119px;text-align:center;color:#008000">审批通过</div>
<div class="a" style="left:233px;top:359px;width:14px;height:14px;border:1.5px solid #4a90d9;border-radius:2px;background:#fff"></div>
<div class="t" style="left:258px;top:358px;width:47px;text-align:center;color:#333">3</div>
<div class="t" style="left:306px;top:358px;width:119px;text-align:center;color:#0a74ec">202103002</div>
<div class="t" style="left:436px;top:358px;width:289px;overflow:hidden;color:#0a74ec">山西弘文房地产总公司电气安装工程劳务分包...</div>
<div class="t" style="left:736px;top:358px;width:189px;overflow:hidden;color:#0a74ec">山西弘文房地产总公司电气...</div>
<div class="t" style="left:926px;top:358px;width:119px;text-align:center;color:#0a74ec">张鑫</div>
<div class="t" style="left:1046px;top:358px;width:119px;text-align:center;color:#333">2021-03-28</div>
<div class="t" style="left:1166px;top:358px;width:108px;text-align:right;color:#333">4,099.00</div>
<div class="t" style="left:1296px;top:358px;width:339px;overflow:hidden;color:#0a74ec">山西弘文房地产总公司电气安装工程</div>
<div class="t" style="left:1636px;top:358px;width:119px;text-align:center;color:#ff9900">审批中</div>
<div class="a" style="left:233px;top:388px;width:14px;height:14px;border:1.5px solid #4a90d9;border-radius:2px;background:#fff"></div>
<div class="t" style="left:258px;top:387px;width:47px;text-align:center;color:#333">4</div>
<div class="t" style="left:306px;top:387px;width:119px;text-align:center;color:#0a74ec">202110001</div>
<div class="t" style="left:436px;top:387px;width:289px;overflow:hidden;color:#0a74ec">西安成都路龙湖上河城项目---拆除工程劳务合...</div>
<div class="t" style="left:736px;top:387px;width:189px;overflow:hidden;color:#0a74ec">西安成都路龙湖上河城项目--...</div>
<div class="t" style="left:926px;top:387px;width:119px;text-align:center;color:#0a74ec">李若若</div>
<div class="t" style="left:1046px;top:387px;width:119px;text-align:center;color:#333">2021-10-19</div>
<div class="t" style="left:1166px;top:387px;width:108px;text-align:right;color:#333">5,770,200.00</div>
<div class="t" style="left:1296px;top:387px;width:339px;overflow:hidden;color:#0a74ec">西安成都路龙湖上河城项目</div>
<div class="t" style="left:1636px;top:387px;width:119px;text-align:center;color:#ff9900">审批中</div>
<div class="a" style="left:233px;top:417px;width:14px;height:14px;border:1.5px solid #4a90d9;border-radius:2px;background:#fff"></div>
<div class="t" style="left:258px;top:416px;width:47px;text-align:center;color:#333">5</div>
<div class="t" style="left:306px;top:416px;width:119px;text-align:center;color:#0a74ec">202112003</div>
<div class="t" style="left:436px;top:416px;width:289px;overflow:hidden;color:#0a74ec">重庆市鹅岭公园绿化景观提升工程施工工程款...</div>
<div class="t" style="left:736px;top:416px;width:189px;overflow:hidden;color:#0a74ec">重庆市鹅岭公园绿化景观提...</div>
<div class="t" style="left:926px;top:416px;width:119px;text-align:center;color:#0a74ec">游依</div>
<div class="t" style="left:1046px;top:416px;width:119px;text-align:center;color:#333">2021-12-30</div>
<div class="t" style="left:1166px;top:416px;width:108px;text-align:right;color:#333">85,041.00</div>
<div class="t" style="left:1296px;top:416px;width:339px;overflow:hidden;color:#0a74ec">重庆市鹅岭公园绿化景观提升工程施工</div>
<div class="t" style="left:1636px;top:416px;width:119px;text-align:center;color:#008000">审批通过</div>
<div class="a" style="left:233px;top:446px;width:14px;height:14px;border:1.5px solid #4a90d9;border-radius:2px;background:#fff"></div>
<div class="t" style="left:258px;top:445px;width:47px;text-align:center;color:#333">6</div>
<div class="t" style="left:306px;top:445px;width:119px;text-align:center;color:#0a74ec">202108001</div>
<div class="t" style="left:436px;top:445px;width:289px;overflow:hidden;color:#0a74ec">潼南区2019年绿化补贴项目-施工2标段完工结算</div>
<div class="t" style="left:736px;top:445px;width:189px;overflow:hidden;color:#0a74ec">潼南区2019年绿化补贴项目-...</div>
<div class="t" style="left:926px;top:445px;width:119px;text-align:center;color:#0a74ec">李华</div>
<div class="t" style="left:1046px;top:445px;width:119px;text-align:center;color:#333">2021-08-01</div>
<div class="t" style="left:1166px;top:445px;width:108px;text-align:right;color:#333">4,214,898.00</div>
<div class="t" style="left:1296px;top:445px;width:339px;overflow:hidden;color:#0a74ec">潼南区2019年绿化补贴项目-施工2标段</div>
<div class="t" style="left:1636px;top:445px;width:119px;text-align:center;color:#008000">审批通过</div>
<div class="a" style="left:233px;top:475px;width:14px;height:14px;border:1.5px solid #4a90d9;border-radius:2px;background:#fff"></div>
<div class="t" style="left:258px;top:474px;width:47px;text-align:center;color:#333">7</div>
<div class="t" style="left:306px;top:474px;width:119px;text-align:center;color:#0a74ec">202012001</div>
<div class="t" style="left:436px;top:474px;width:289px;overflow:hidden;color:#0a74ec">模板劳务完工结算</div>
<div class="t" style="left:736px;top:474px;width:189px;overflow:hidden;color:#0a74ec">模板班组劳务合同</div>
<div class="t" style="left:926px;top:474px;width:119px;text-align:center;color:#0a74ec">张鑫</div>
<div class="t" style="left:1046px;top:474px;width:119px;text-align:center;color:#333">2020-12-10</div>
<div class="t" style="left:1166px;top:474px;width:108px;text-align:right;color:#333">30,000.00</div>
<div class="t" style="left:1296px;top:474px;width:339px;overflow:hidden;color:#0a74ec">螺丝厂办公室装饰</div>
<div class="t" style="left:1636px;top:474px;width:119px;text-align:center;color:#008000">审批通过</div>
<div class="t" style="left:258px;top:503px;width:47px;text-align:center;color:#333">合计</div>
<div class="t" style="left:1166px;top:503px;width:108px;text-align:right;color:#333">14,133,038.00</div>
<svg class="a" style="left:1675px;top:709px" width="30" height="28" viewBox="0 0 30 28">
<path d="M1 14 L7 3 L17 3 C12 5 10 10 9.5 15 C9 20 7.5 23 6 26 Z" fill="#8a9ab8"/>
<path d="M10 27 L19 27 L26 16 C21 16 17 17 14 20 C12 22 11 24 10 27 Z" fill="#8a9ab8"/>
<path d="M10 21 C10 15 11 11 13 8.5 C15 6.5 17.5 5 20 5 C23 7 25 10 26 13.5 C21 13.5 17 14.5 14.5 16.5 C12.5 18 11 19.5 10 21 Z" fill="#e0a088"/>
</svg>
<div class="t" style="left:1703px;top:709px;font-size:23px;line-height:26px;color:#8796b5;font-weight:500">泛普软件</div>
<div class="t" style="left:1679px;top:733px;font-family:'Liberation Serif',serif;font-size:11.5px;line-height:14px;color:#e0a088;letter-spacing:1.25px;font-weight:bold">www.fanpusoft.com</div>
</body></html>
